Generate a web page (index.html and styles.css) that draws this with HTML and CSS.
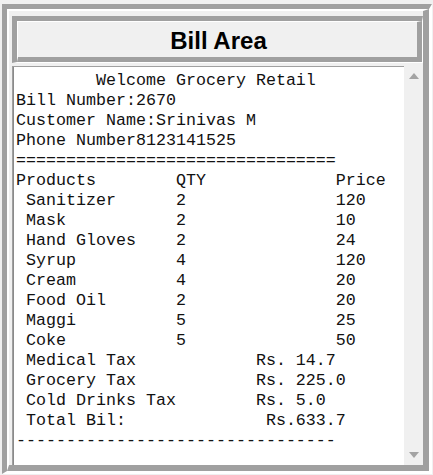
FILE: index.html
```html
<!DOCTYPE html>
<html>
<head>
<meta charset="utf-8">
<link rel="stylesheet" href="styles.css">
</head>
<body>
<div class="frame">
  <div class="frame-inner">
    <div class="title"><div class="title-in">Bill Area</div></div>
    <div class="gap"></div>
    <div class="textrow">
      <pre class="bill">        Welcome Grocery Retail
Bill Number:2670
Customer Name:Srinivas M
Phone Number8123141525
================================
Products        QTY             Price
 Sanitizer      2               120
 Mask           2               10
 Hand Gloves    2               24
 Syrup          4               120
 Cream          4               20
 Food Oil       2               20
 Maggi          5               25
 Coke           5               50
 Medical Tax            Rs. 14.7
 Grocery Tax            Rs. 225.0
 Cold Drinks Tax        Rs. 5.0
 Total Bil:              Rs.633.7
--------------------------------</pre>
      <div class="scrollbar">
        <div class="arrow up"></div>
        <div class="track"></div>
        <div class="arrow down"></div>
      </div>
    </div>
  </div>
</div>
</body>
</html>
```

FILE: styles.css
```css
html, body {
  margin: 0;
  padding: 0;
}
body {
  width: 433px;
  height: 475px;
  overflow: hidden;
  background: #f0f0f0;
}
.frame {
  margin: 4px 0 0 2px;
  width: 422px;
  height: 462px;
  border-top: 5px solid #a0a0a0;
  border-left: 5px solid #a0a0a0;
  border-right: 3px solid #ffffff;
  border-bottom: 3px solid #ffffff;
}
.frame-inner {
  box-sizing: border-box;
  width: 100%;
  height: 100%;
  border-top: 2px solid #ffffff;
  border-left: 2px solid #ffffff;
  border-right: 6px solid #a0a0a0;
  border-bottom: 6px solid #a0a0a0;
  padding: 5px 0 0 3px;
  display: flex;
  flex-direction: column;
}
.title {
  height: 47px;
  box-sizing: border-box;
  border-top: 5px solid #a0a0a0;
  border-left: 5px solid #a0a0a0;
  border-right: 1px solid #ffffff;
  border-bottom: 1px solid #ffffff;
  flex: none;
}
.title-in {
  box-sizing: border-box;
  height: 100%;
  border-top: 1px solid #ffffff;
  border-left: 1px solid #ffffff;
  border-right: 5px solid #a0a0a0;
  border-bottom: 5px solid #a0a0a0;
  display: flex;
  align-items: center;
  justify-content: center;
  font-family: "Liberation Sans", Arial, sans-serif;
  font-weight: bold;
  font-size: 24px;
  color: #000;
  padding-top: 2px;
  padding-left: 2px;
}
.gap {
  height: 3px;
  flex: none;
}
.textrow {
  flex: 1;
  display: flex;
  min-height: 0;
}
.bill {
  flex: 1;
  margin: 0;
  background: #ffffff;
  border-top: 1px solid #a0a0a0;
  border-left: 1px solid #a0a0a0;
  box-shadow: inset 1px 0 0 #8a8a8a;
  padding: 4px 0 0 3px;
  font-family: "Liberation Mono", "Courier New", monospace;
  font-size: 16.67px;
  line-height: 20px;
  color: #111;
  white-space: pre;
  overflow: hidden;
}
.scrollbar {
  width: 19px;
  flex: none;
  background: #f0f0f0;
  display: flex;
  flex-direction: column;
  align-items: center;
}
.track {
  flex: 1;
}
.arrow {
  width: 0;
  height: 0;
  border-left: 5px solid transparent;
  border-right: 5px solid transparent;
}
.arrow.up {
  margin-top: 7px;
  border-bottom: 6px solid #a3a3a3;
}
.arrow.down {
  margin-bottom: 7px;
  border-top: 6px solid #a3a3a3;
}
```
